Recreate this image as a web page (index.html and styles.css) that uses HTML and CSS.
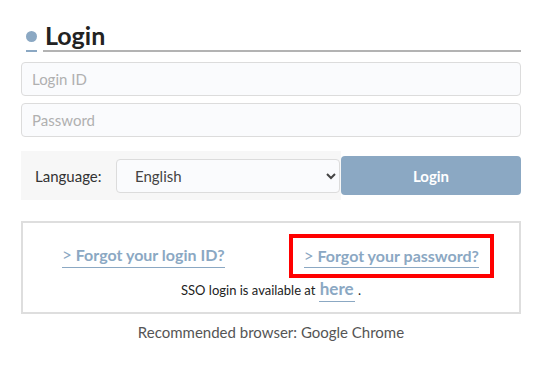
FILE: index.html
```html
<!DOCTYPE html>
<html>
<head>
<meta charset="utf-8">
<link rel="stylesheet" href="styles.css">
</head>
<body>
<div class="page">
  <h1 class="title"><span class="dot-wrap"><span class="dot"></span></span><span class="title-text">Login</span></h1>
  <input class="field" type="text" placeholder="Login ID">
  <input class="field" type="password" placeholder="Password">
  <div class="action-row">
    <div class="lang">
      <label class="lang-label">Language:</label>
      <select class="lang-select"><option>English</option></select>
    </div>
    <button class="login-btn">Login</button>
  </div>
  <div class="help-box">
    <div class="links">
      <a class="help-link first"><span class="chev">&gt;</span> Forgot your login ID?</a>
      <span class="highlight"><a class="help-link"><span class="chev">&gt;</span> Forgot your password?</a></span>
    </div>
    <p class="sso">SSO login is available at <a class="here">here</a> .</p>
  </div>
  <p class="recommend">Recommended browser: Google Chrome</p>
</div>
</body>
</html>
```
FILE: styles.css
```css
* { box-sizing: border-box; }
body {
  margin: 0;
  background: #fff;
  font-family: Lato, "Noto Sans", sans-serif;
  color: #333;
}
.page {
  padding: 20px 19px 0 21px;
  display: flex;
  flex-direction: column;
}
.title {
  margin: 0 0 10px 0;
  display: flex;
  align-items: flex-end;
  font-size: 25px;
  font-weight: 700;
  line-height: 30px;
  color: #222;
}
.dot-wrap {
  margin-left: 5px;
  width: 11px;
  height: 30px;
  display: flex;
  align-items: flex-end;
  border-bottom: 2px solid #8ba8c3;
  padding-bottom: 8px;
}
.dot {
  width: 11px;
  height: 11px;
  border-radius: 50%;
  background: #8ba8c3;
}
.title-text {
  margin-left: 6px;
  flex: 1;
  padding-left: 2px;
  border-bottom: 2px solid #b3b3b3;
}
.field {
  height: 34px;
  margin-bottom: 7px;
  border: 1px solid #dcdcdc;
  border-radius: 4px;
  background: #fafbfd;
  padding: 0 10px;
  font-family: Lato, "Noto Sans", sans-serif;
  font-size: 15px;
  color: #333;
}
.field::placeholder { color: #b0b0b0; }
.action-row {
  margin-top: 7px;
  display: flex;
  align-items: center;
}
.lang {
  width: 320px;
  height: 49px;
  background: #f7f7f7;
  display: flex;
  align-items: center;
  padding-left: 14px;
}
.lang-label {
  font-size: 15px;
  color: #333;
  width: 81px;
}
.lang-select {
  width: 224px;
  height: 34px;
  border: 1px solid #dcdcdc;
  border-radius: 4px;
  background: #fafbfd;
  font-family: Lato, "Noto Sans", sans-serif;
  font-size: 15px;
  color: #444;
  padding-left: 14px;
}
.login-btn {
  flex: 1;
  height: 39px;
  border: none;
  border-radius: 4px;
  background: #8ba8c3;
  color: #fff;
  font-family: Lato, "Noto Sans", sans-serif;
  font-size: 15px;
  font-weight: 700;
}
.help-box {
  margin-top: 21px;
  height: 93px;
  border: 2px solid #dedede;
  display: flex;
  flex-direction: column;
  align-items: center;
  padding-top: 11px;
}
.links {
  display: flex;
  width: 100%;
  align-items: center;
}
.help-link {
  font-size: 16px;
  font-weight: 700;
  color: #8ba8c3;
  border-bottom: 1.5px solid #8ba8c3;
  padding-bottom: 2px;
  line-height: 20px;
  white-space: nowrap;
}
.chev {
  font-weight: 400;
  font-size: 17px;
}
.help-link.first { margin-left: 39px; }
.highlight {
  margin-left: 64px;
  border: 4px solid #f00;
  padding: 8px 11px 8px 11px;
}
.sso {
  margin: 0 0 0 0;
  font-size: 13px;
  color: #222;
}
.here {
  font-size: 17px;
  font-weight: 700;
  color: #8ba8c3;
  border-bottom: 1.5px solid #8ba8c3;
  padding: 0 1px 2px;
}
.recommend {
  margin: 9px 0 0 0;
  text-align: center;
  font-size: 15px;
  color: #555;
}
```
